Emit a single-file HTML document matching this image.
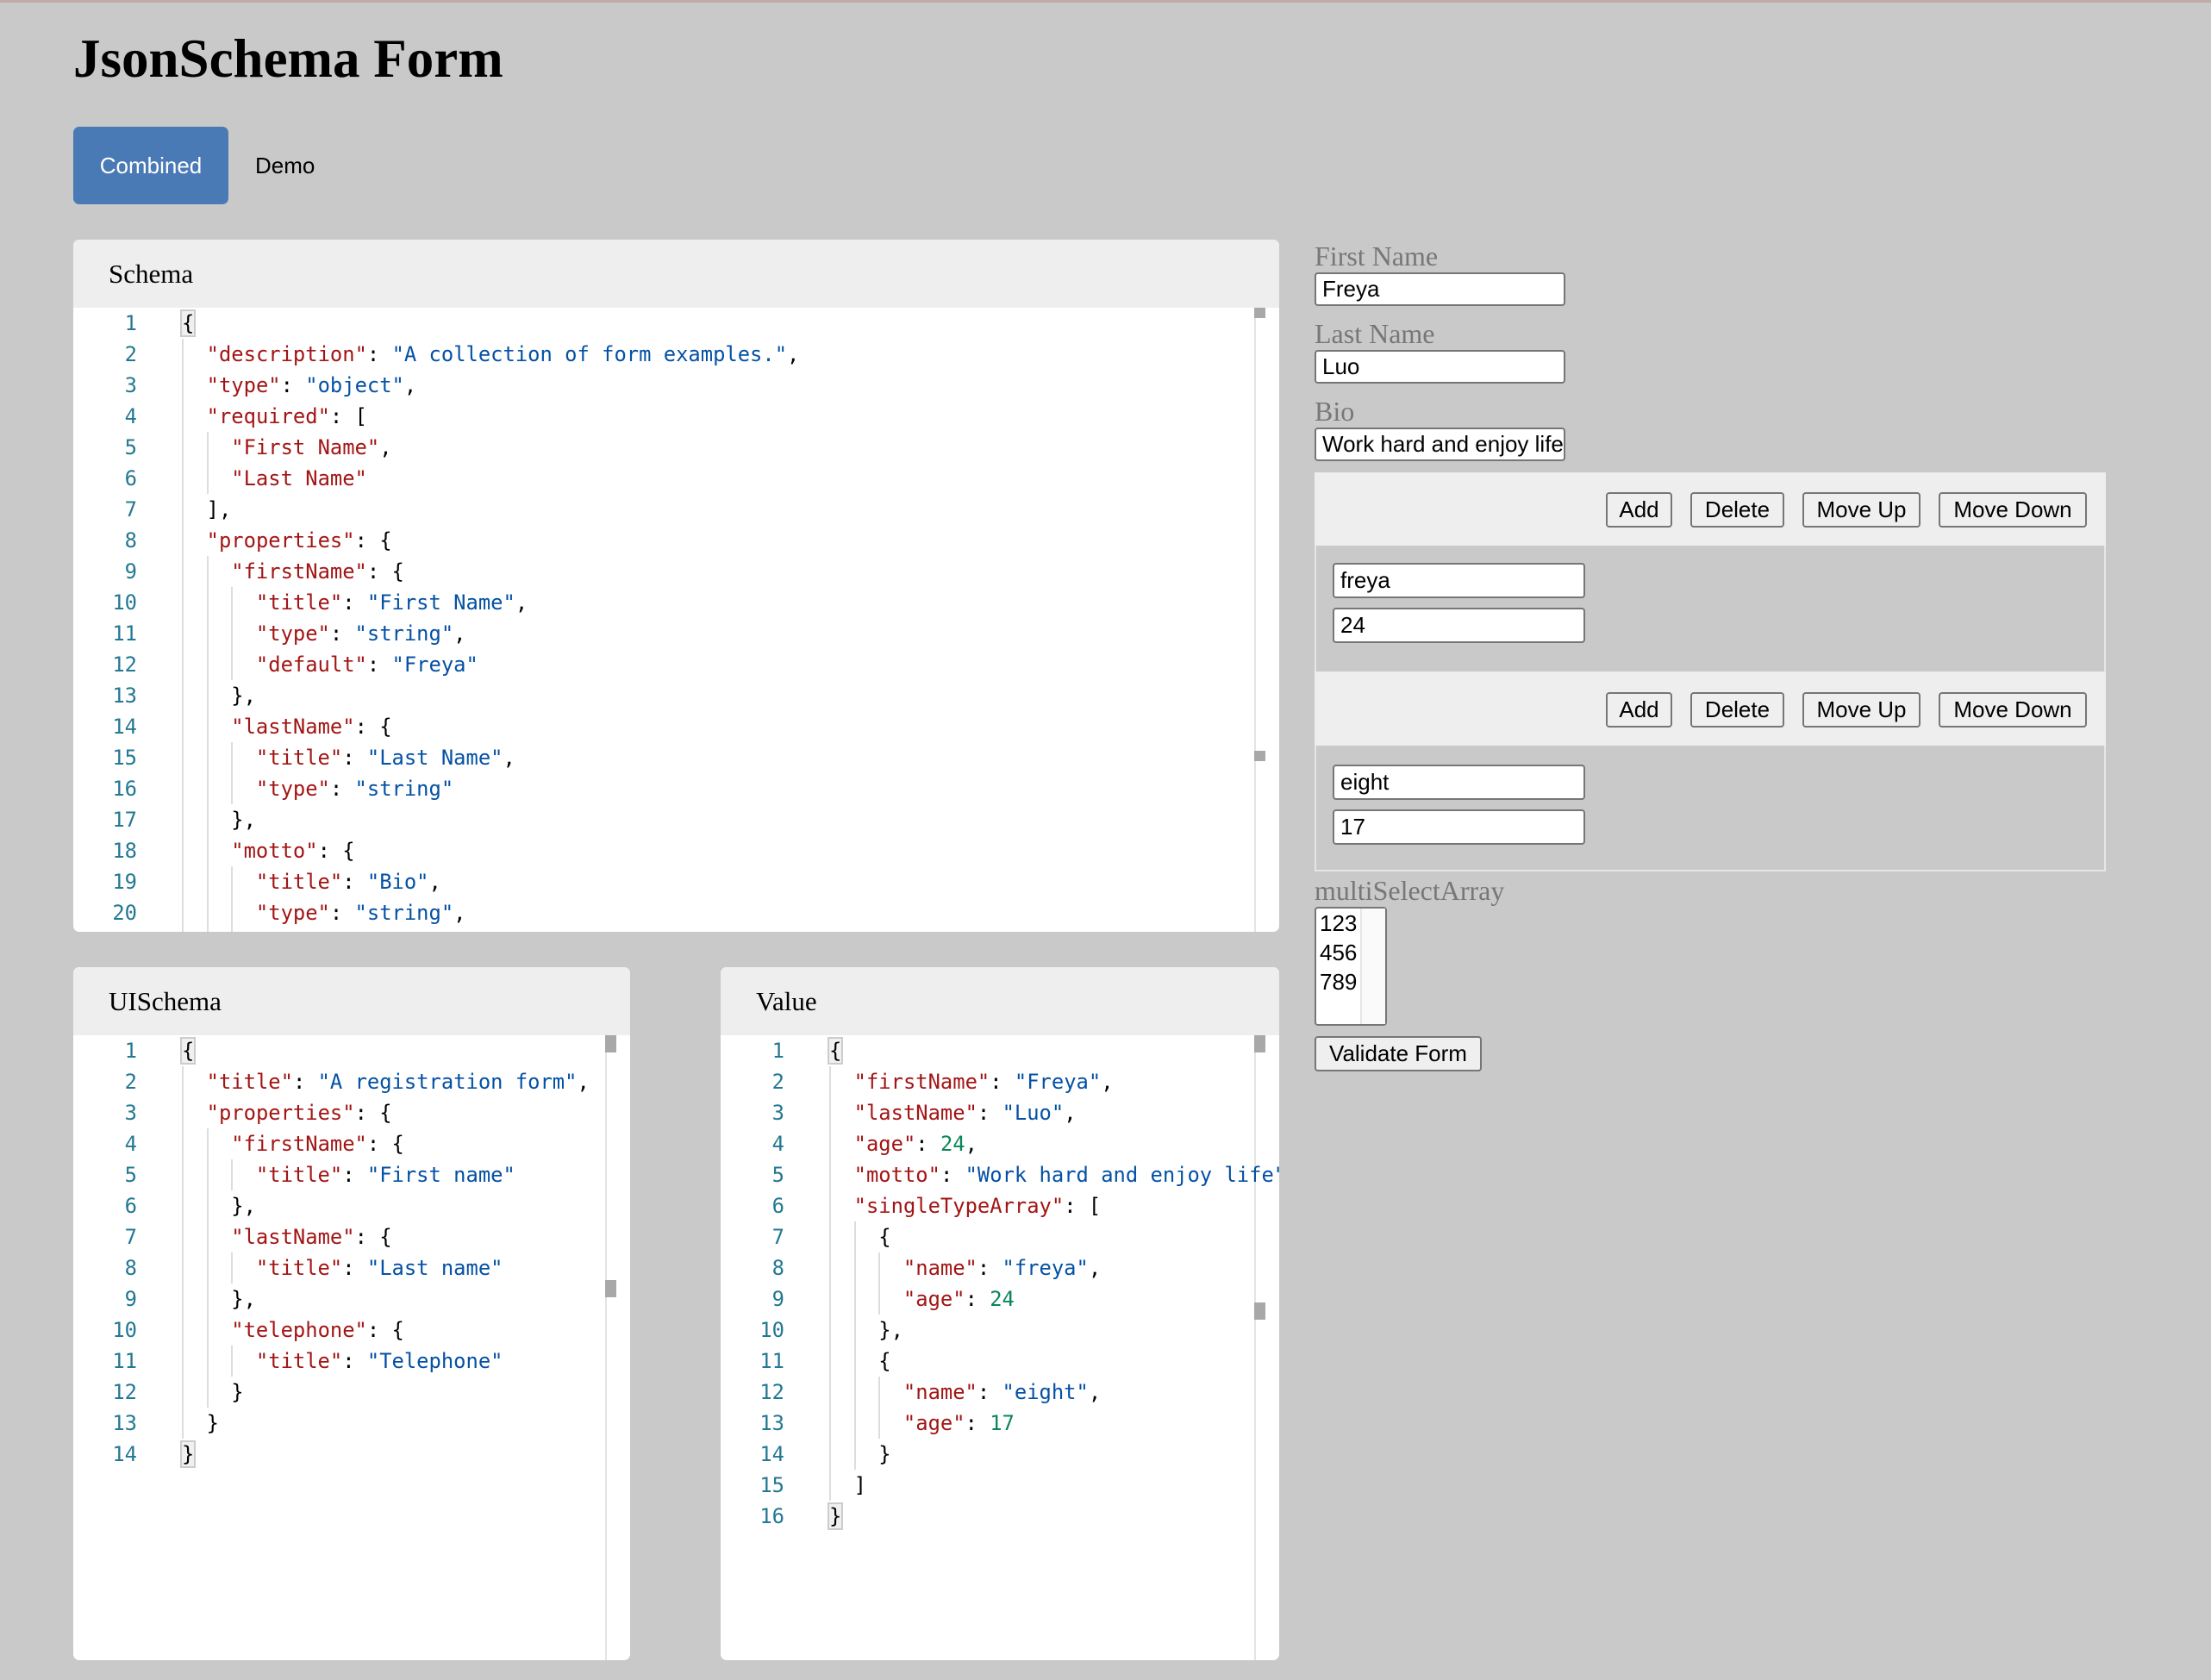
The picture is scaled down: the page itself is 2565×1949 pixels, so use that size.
<!DOCTYPE html>
<html><head><meta charset="utf-8">
<style>
*{box-sizing:border-box;margin:0;padding:0}
body{width:2565px;height:1949px;background:#c9c9c9;position:relative;overflow:hidden;border-top:3px solid #bfaaa5;font-family:"Liberation Sans",sans-serif}
#w{position:absolute;left:0;top:-3px;width:2565px;height:1949px}
.abs{position:absolute}
h1{position:absolute;left:85px;top:34px;font:bold 63px/1 "Liberation Serif",serif;color:#000}
.tab{position:absolute;top:147px;height:90px;line-height:90px;font-size:26px}
.panel{position:absolute;background:#fff;border-radius:7px;overflow:hidden}
.ph{position:absolute;left:0;right:0;top:0;height:79px;background:#eee;font:31px/79px "Liberation Serif",serif;padding-left:41px;color:#000}
.code{position:absolute;left:0;right:0;top:79px;bottom:0;font:23.8px/36px "DejaVu Sans Mono",monospace}
.l{height:36px;position:relative}
.n{position:absolute;left:0;width:74px;text-align:right;color:#237893}
.c{position:absolute;left:126px;white-space:pre}
.g{display:inline-block;width:2ch;height:36px;border-left:2px solid #ddd;vertical-align:top}
.k{color:#a31515}.s{color:#0451a5}.m{color:#098658}
.sb{position:absolute;top:79px;bottom:0;width:2px;background:#e4e4e4}
.mk{position:absolute;width:13px;background:#a8a8a8}
.br{outline:2px solid #ccc;background:#f0f0f0}
.lab{position:absolute;left:1525px;font:32px/1 "Liberation Serif",serif;color:#777}
.in{position:absolute;background:#fff;border:2px solid #767676;border-radius:4px;font-size:26px;line-height:35px;padding-left:7px;white-space:nowrap;overflow:hidden;color:#000}
.btn{position:absolute;background:#efefef;border:2px solid #767676;border-radius:4px;font-size:26px;text-align:center;line-height:37px;color:#000}
</style></head><body>
<h1>JsonSchema Form</h1>
<div id="w">
<div class="tab" style="left:85px;width:180px;background:#4a7ab5;color:#fff;border-radius:7px;text-align:center">Combined</div>
<div class="tab" style="left:296px;color:#000">Demo</div>

<!-- Schema -->
<div class="panel" style="left:85px;top:278px;width:1399px;height:803px">
<div class="ph">Schema</div>
<div class="sb" style="left:1370px"></div>
<div class="mk" style="left:1370px;top:79px;height:12px"></div>
<div class="mk" style="left:1370px;top:593px;height:12px"></div>
<div class="code">
<div class="l"><span class="n">1</span><span class="c"><span class="br">{</span></span></div>
<div class="l"><span class="n">2</span><span class="c"><i class="g"></i><span class="k">"description"</span>: <span class="s">"A collection of form examples."</span>,</span></div>
<div class="l"><span class="n">3</span><span class="c"><i class="g"></i><span class="k">"type"</span>: <span class="s">"object"</span>,</span></div>
<div class="l"><span class="n">4</span><span class="c"><i class="g"></i><span class="k">"required"</span>: [</span></div>
<div class="l"><span class="n">5</span><span class="c"><i class="g"></i><i class="g"></i><span class="k">"First Name"</span>,</span></div>
<div class="l"><span class="n">6</span><span class="c"><i class="g"></i><i class="g"></i><span class="k">"Last Name"</span></span></div>
<div class="l"><span class="n">7</span><span class="c"><i class="g"></i>],</span></div>
<div class="l"><span class="n">8</span><span class="c"><i class="g"></i><span class="k">"properties"</span>: {</span></div>
<div class="l"><span class="n">9</span><span class="c"><i class="g"></i><i class="g"></i><span class="k">"firstName"</span>: {</span></div>
<div class="l"><span class="n">10</span><span class="c"><i class="g"></i><i class="g"></i><i class="g"></i><span class="k">"title"</span>: <span class="s">"First Name"</span>,</span></div>
<div class="l"><span class="n">11</span><span class="c"><i class="g"></i><i class="g"></i><i class="g"></i><span class="k">"type"</span>: <span class="s">"string"</span>,</span></div>
<div class="l"><span class="n">12</span><span class="c"><i class="g"></i><i class="g"></i><i class="g"></i><span class="k">"default"</span>: <span class="s">"Freya"</span></span></div>
<div class="l"><span class="n">13</span><span class="c"><i class="g"></i><i class="g"></i>},</span></div>
<div class="l"><span class="n">14</span><span class="c"><i class="g"></i><i class="g"></i><span class="k">"lastName"</span>: {</span></div>
<div class="l"><span class="n">15</span><span class="c"><i class="g"></i><i class="g"></i><i class="g"></i><span class="k">"title"</span>: <span class="s">"Last Name"</span>,</span></div>
<div class="l"><span class="n">16</span><span class="c"><i class="g"></i><i class="g"></i><i class="g"></i><span class="k">"type"</span>: <span class="s">"string"</span></span></div>
<div class="l"><span class="n">17</span><span class="c"><i class="g"></i><i class="g"></i>},</span></div>
<div class="l"><span class="n">18</span><span class="c"><i class="g"></i><i class="g"></i><span class="k">"motto"</span>: {</span></div>
<div class="l"><span class="n">19</span><span class="c"><i class="g"></i><i class="g"></i><i class="g"></i><span class="k">"title"</span>: <span class="s">"Bio"</span>,</span></div>
<div class="l"><span class="n">20</span><span class="c"><i class="g"></i><i class="g"></i><i class="g"></i><span class="k">"type"</span>: <span class="s">"string"</span>,</span></div>
<div class="l"><span class="n">21</span><span class="c"><i class="g"></i><i class="g"></i><i class="g"></i><span class="k">"default"</span>: <span class="s">"Work hard"</span></span></div>
</div></div>

<!-- UISchema -->
<div class="panel" style="left:85px;top:1122px;width:646px;height:804px">
<div class="ph">UISchema</div>
<div class="sb" style="left:617px"></div>
<div class="mk" style="left:617px;top:79px;height:20px"></div>
<div class="mk" style="left:617px;top:363px;height:20px"></div>
<div class="code">
<div class="l"><span class="n">1</span><span class="c"><span class="br">{</span></span></div>
<div class="l"><span class="n">2</span><span class="c"><i class="g"></i><span class="k">"title"</span>: <span class="s">"A registration form"</span>,</span></div>
<div class="l"><span class="n">3</span><span class="c"><i class="g"></i><span class="k">"properties"</span>: {</span></div>
<div class="l"><span class="n">4</span><span class="c"><i class="g"></i><i class="g"></i><span class="k">"firstName"</span>: {</span></div>
<div class="l"><span class="n">5</span><span class="c"><i class="g"></i><i class="g"></i><i class="g"></i><span class="k">"title"</span>: <span class="s">"First name"</span></span></div>
<div class="l"><span class="n">6</span><span class="c"><i class="g"></i><i class="g"></i>},</span></div>
<div class="l"><span class="n">7</span><span class="c"><i class="g"></i><i class="g"></i><span class="k">"lastName"</span>: {</span></div>
<div class="l"><span class="n">8</span><span class="c"><i class="g"></i><i class="g"></i><i class="g"></i><span class="k">"title"</span>: <span class="s">"Last name"</span></span></div>
<div class="l"><span class="n">9</span><span class="c"><i class="g"></i><i class="g"></i>},</span></div>
<div class="l"><span class="n">10</span><span class="c"><i class="g"></i><i class="g"></i><span class="k">"telephone"</span>: {</span></div>
<div class="l"><span class="n">11</span><span class="c"><i class="g"></i><i class="g"></i><i class="g"></i><span class="k">"title"</span>: <span class="s">"Telephone"</span></span></div>
<div class="l"><span class="n">12</span><span class="c"><i class="g"></i><i class="g"></i>}</span></div>
<div class="l"><span class="n">13</span><span class="c"><i class="g"></i>}</span></div>
<div class="l"><span class="n">14</span><span class="c"><span class="br">}</span></span></div>
</div></div>

<!-- Value -->
<div class="panel" style="left:836px;top:1122px;width:648px;height:804px">
<div class="ph">Value</div>
<div class="sb" style="left:619px"></div>
<div class="mk" style="left:619px;top:79px;height:20px"></div>
<div class="mk" style="left:619px;top:389px;height:20px"></div>
<div class="code">
<div class="l"><span class="n">1</span><span class="c"><span class="br">{</span></span></div>
<div class="l"><span class="n">2</span><span class="c"><i class="g"></i><span class="k">"firstName"</span>: <span class="s">"Freya"</span>,</span></div>
<div class="l"><span class="n">3</span><span class="c"><i class="g"></i><span class="k">"lastName"</span>: <span class="s">"Luo"</span>,</span></div>
<div class="l"><span class="n">4</span><span class="c"><i class="g"></i><span class="k">"age"</span>: <span class="m">24</span>,</span></div>
<div class="l"><span class="n">5</span><span class="c"><i class="g"></i><span class="k">"motto"</span>: <span class="s">"Work hard and enjoy life"</span>,</span></div>
<div class="l"><span class="n">6</span><span class="c"><i class="g"></i><span class="k">"singleTypeArray"</span>: [</span></div>
<div class="l"><span class="n">7</span><span class="c"><i class="g"></i><i class="g"></i>{</span></div>
<div class="l"><span class="n">8</span><span class="c"><i class="g"></i><i class="g"></i><i class="g"></i><span class="k">"name"</span>: <span class="s">"freya"</span>,</span></div>
<div class="l"><span class="n">9</span><span class="c"><i class="g"></i><i class="g"></i><i class="g"></i><span class="k">"age"</span>: <span class="m">24</span></span></div>
<div class="l"><span class="n">10</span><span class="c"><i class="g"></i><i class="g"></i>},</span></div>
<div class="l"><span class="n">11</span><span class="c"><i class="g"></i><i class="g"></i>{</span></div>
<div class="l"><span class="n">12</span><span class="c"><i class="g"></i><i class="g"></i><i class="g"></i><span class="k">"name"</span>: <span class="s">"eight"</span>,</span></div>
<div class="l"><span class="n">13</span><span class="c"><i class="g"></i><i class="g"></i><i class="g"></i><span class="k">"age"</span>: <span class="m">17</span></span></div>
<div class="l"><span class="n">14</span><span class="c"><i class="g"></i><i class="g"></i>}</span></div>
<div class="l"><span class="n">15</span><span class="c"><i class="g"></i>]</span></div>
<div class="l"><span class="n">16</span><span class="c"><span class="br">}</span></span></div>
</div></div>

<!-- Form -->
<div class="lab" style="top:281px">First Name</div>
<div class="in" style="left:1525px;top:316px;width:291px;height:39px">Freya</div>
<div class="lab" style="top:371px">Last Name</div>
<div class="in" style="left:1525px;top:406px;width:291px;height:39px">Luo</div>
<div class="lab" style="top:461px">Bio</div>
<div class="in" style="left:1525px;top:496px;width:291px;height:39px;padding-right:4px">Work hard and enjoy life</div>

<div class="abs" style="left:1525px;top:548px;width:918px;height:463px;border:2px solid #e6e6e6;border-top:none"></div>
<div class="abs" style="left:1525px;top:548px;width:918px;height:85px;background:#eee"></div>
<div class="btn" style="left:1863px;top:571px;width:77px;height:41px">Add</div>
<div class="btn" style="left:1961px;top:571px;width:109px;height:41px">Delete</div>
<div class="btn" style="left:2091px;top:571px;width:137px;height:41px">Move Up</div>
<div class="btn" style="left:2249px;top:571px;width:172px;height:41px">Move Down</div>
<div class="in" style="left:1546px;top:653px;width:293px;height:41px;line-height:37px">freya</div>
<div class="in" style="left:1546px;top:705px;width:293px;height:41px;line-height:37px">24</div>

<div class="abs" style="left:1525px;top:779px;width:918px;height:86px;background:#eee"></div>
<div class="btn" style="left:1863px;top:803px;width:77px;height:41px">Add</div>
<div class="btn" style="left:1961px;top:803px;width:109px;height:41px">Delete</div>
<div class="btn" style="left:2091px;top:803px;width:137px;height:41px">Move Up</div>
<div class="btn" style="left:2249px;top:803px;width:172px;height:41px">Move Down</div>
<div class="in" style="left:1546px;top:887px;width:293px;height:41px;line-height:37px">eight</div>
<div class="in" style="left:1546px;top:939px;width:293px;height:41px;line-height:37px">17</div>

<div class="lab" style="top:1017px">multiSelectArray</div>
<div class="abs" style="left:1525px;top:1052px;width:84px;height:138px;background:#fff;border:2px solid #767676;border-radius:4px;font-size:26px;line-height:34px;padding:0 0 0 4px;color:#000">123<br>456<br>789
<div class="abs" style="right:0;top:0;bottom:0;width:29px;background:#fafafa;border-left:2px solid #e6e6e6"></div></div>
<div class="btn" style="left:1525px;top:1202px;width:194px;height:41px">Validate Form</div>
</div>
</body></html>
